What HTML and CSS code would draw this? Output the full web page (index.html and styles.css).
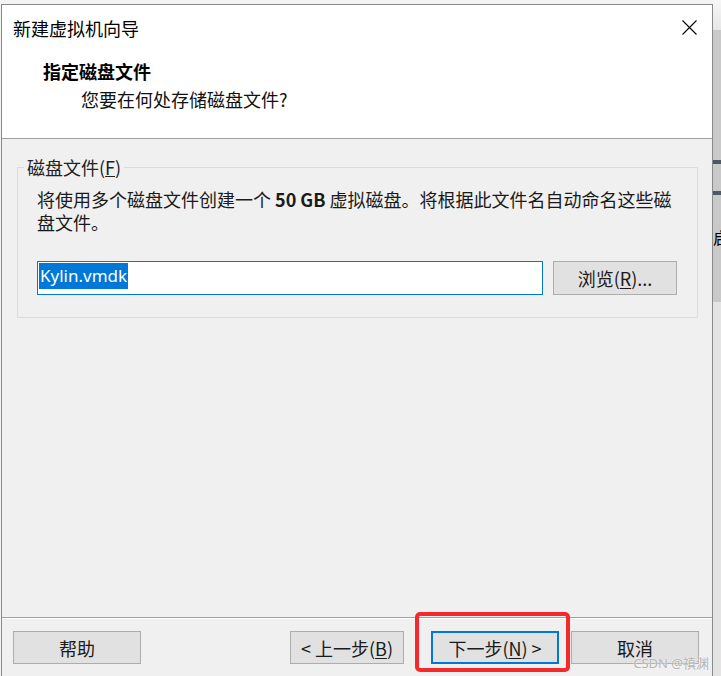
FILE: index.html
```html
<!DOCTYPE html>
<html lang="zh-CN">
<head>
<meta charset="utf-8">
<title>新建虚拟机向导</title>
<link rel="stylesheet" href="styles.css">
</head>
<body>
<div class="page">
  <div class="dialog">
    <header class="header">
      <div class="titlebar">
        <span class="title">新建虚拟机向导</span>
        <svg class="close" width="15" height="15" viewBox="0 0 15 15"><path d="M0.5 0.5 L14.5 14.5 M14.5 0.5 L0.5 14.5" stroke="#000" stroke-width="1.1" fill="none"/></svg>
      </div>
      <div class="heading">指定磁盘文件</div>
      <div class="subheading">您要在何处存储磁盘文件?</div>
    </header>
    <main class="content">
      <fieldset class="group">
        <legend class="legend">磁盘文件(<u>F</u>)</legend>
        <div class="group-body">
          <p class="desc">将使用多个磁盘文件创建一个 <b class="num">50 GB</b> 虚拟磁盘。将根据此文件名自动命名这些磁盘文件。</p>
          <div class="file-row">
            <div class="input"><span class="sel">Kylin.vmdk</span></div>
            <div class="btn browse">浏览(<u>R</u>)...</div>
          </div>
        </div>
      </fieldset>
    </main>
    <footer class="footer">
      <div class="btn fbtn">帮助</div>
      <div class="btn fbtn back">&lt; 上一步(<u>B</u>)</div>
      <div class="next-wrap">
        <div class="btn fbtn next">下一步(<u>N</u>) &gt;</div>
        <div class="highlight"></div>
      </div>
      <div class="btn fbtn cancel">取消</div>
    </footer>
  </div>
  <div class="side">
    <div class="side-top"></div>
    <div class="side-mid">
      <div class="side-line"></div>
      <div class="side-line second"></div>
      <div class="side-char">启</div>
    </div>
    <div class="side-bottom"></div>
  </div>
  <div class="watermark">CSDN @禛渊</div>
</div>
</body>
</html>
```

FILE: styles.css
```css
html, body {
  margin: 0;
  padding: 0;
}
body {
  background: #f3f3f3;
  font-family: "Noto Sans CJK SC", "Noto Sans", sans-serif;
  color: #000;
  overflow: hidden;
}
.page {
  position: relative;
  display: flex;
  width: 721px;
  height: 676px;
}
.dialog {
  box-sizing: border-box;
  width: 712px;
  margin-left: 1px;
  margin-top: 4px;
  border: 1px solid #8a8a8a;
  border-bottom: none;
  background: #f0f0f0;
  display: flex;
  flex-direction: column;
  flex: none;
}
.header {
  background: #fff;
  height: 133px;
  border-bottom: 1px solid #a0a0a0;
  flex: none;
}
.titlebar {
  height: 45px;
  display: flex;
  align-items: center;
  justify-content: space-between;
  padding: 0 15px 0 11px;
}
.title {
  font-size: 18px;
  line-height: 24px;
}
.close {
  display: block;
}
.heading {
  margin-top: 7px;
  padding-left: 41px;
  font-size: 18px;
  line-height: 28px;
  font-weight: bold;
}
.subheading {
  padding-left: 79px;
  font-size: 18px;
  line-height: 28px;
  color: #111;
}
.content {
  flex: 1;
}
.group {
  margin: 17px 14px 0 15px;
  padding: 0;
  border: 1px solid #dcdcdc;
  min-width: 0;
}
.legend {
  margin-left: 6px;
  padding: 0 3px;
  font-size: 18px;
  line-height: 22px;
  color: #222;
}
.group-body {
  padding: 10px 20px 22px 19px;
}
.desc {
  margin: 0;
  font-size: 18px;
  line-height: 23px;
  color: #1a1a1a;
}
.num {
  font-weight: bold;
}
.file-row {
  margin-top: 27px;
  display: flex;
  gap: 10px;
}
.input {
  flex: 1;
  box-sizing: border-box;
  height: 34px;
  background: #fff;
  border: 1px solid #0078d7;
  padding: 1px 0 0 1px;
  font-family: "Noto Sans", sans-serif;
  font-size: 17px;
  line-height: 26px;
}
.sel {
  display: inline-block;
  background: #0078d7;
  color: #fff;
  padding: 0 1px;
}
.btn {
  box-sizing: border-box;
  background: #e1e1e1;
  border: 1px solid #adadad;
  display: flex;
  align-items: center;
  justify-content: center;
  font-size: 18px;
  color: #1a1a1a;
}
.btn u {
  text-underline-offset: 2px;
}
.browse {
  width: 124px;
  height: 34px;
}
.footer {
  flex: none;
  border-top: 1px solid #a0a0a0;
  box-shadow: inset 0 1px 0 #fff;
  display: flex;
  align-items: flex-start;
  padding: 13px 13px 12px 11px;
}
.fbtn {
  width: 128px;
  height: 33px;
}
.back {
  width: 114px;
  margin-left: auto;
}
.next-wrap {
  position: relative;
  margin-left: 27px;
}
.next {
  border: 2px solid #0078d7;
}
.highlight {
  position: absolute;
  left: -16px;
  right: -11px;
  top: -19px;
  bottom: -8px;
  border: 4px solid #f42a2a;
  border-radius: 5px;
}
.cancel {
  margin-left: 12px;
}
.side {
  flex: 1;
  display: flex;
  flex-direction: column;
  overflow: hidden;
}
.side-top {
  height: 30px;
  background: linear-gradient(#f7f7f7, #e6e6e6);
}
.side-mid {
  height: 272px;
  background: #c9c9c9;
  display: flex;
  flex-direction: column;
}
.side-line {
  margin-top: 130px;
  height: 4px;
  background: #4d5863;
}
.side-line.second {
  margin-top: 27px;
}
.side-char {
  margin-top: 32px;
  font-size: 16px;
  line-height: 20px;
  white-space: nowrap;
  color: #000;
}
.side-bottom {
  flex: 1;
  background: #e4e4e4;
}
.watermark {
  position: absolute;
  right: 12px;
  bottom: 4px;
  font-family: "Noto Sans", "Noto Sans CJK SC", sans-serif;
  font-size: 13px;
  line-height: 18px;
  color: #b4b4b4;
  text-shadow: 0 0 2px #fff;
}
```
